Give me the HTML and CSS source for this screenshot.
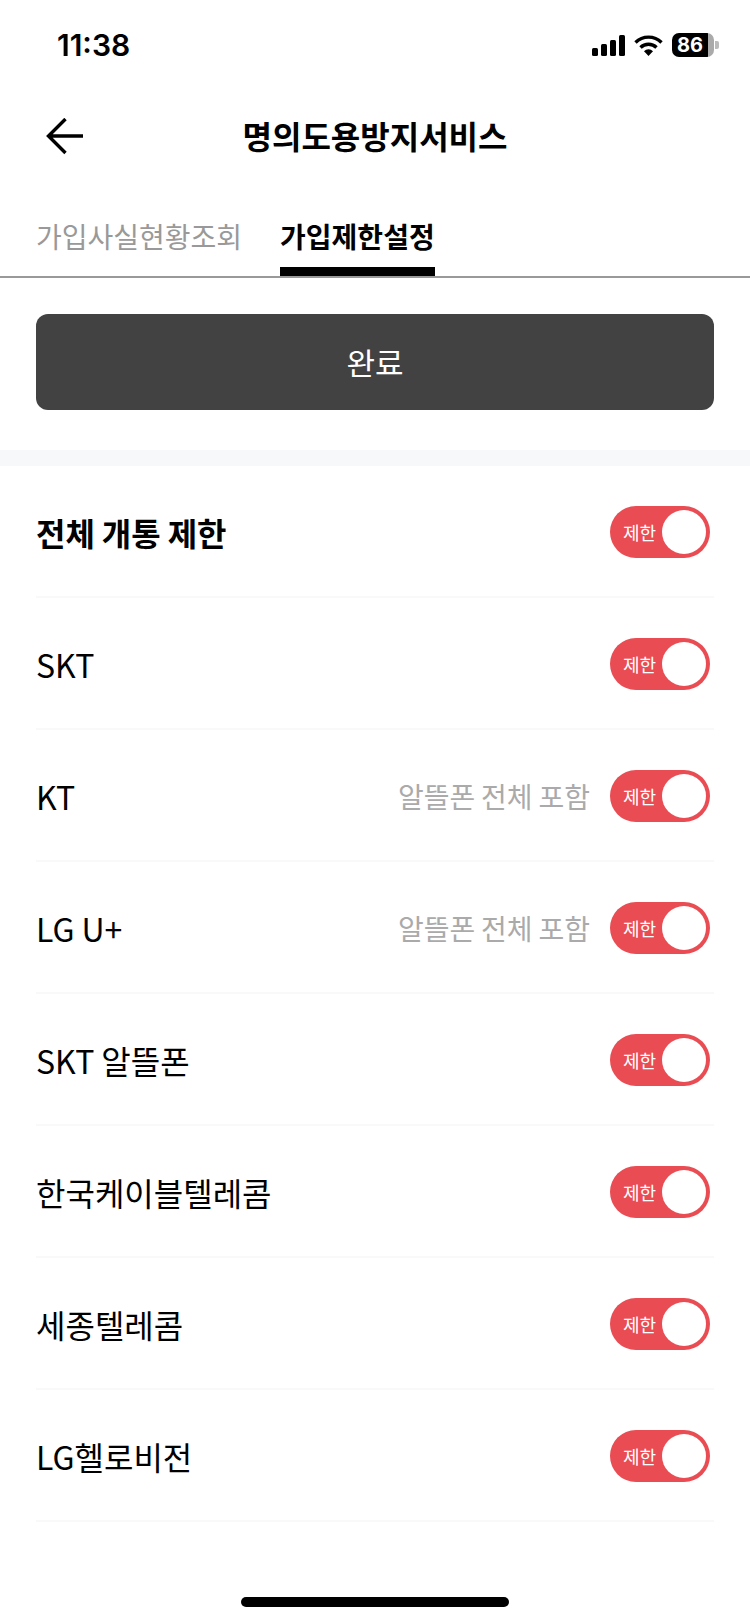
FILE: index.html
```html
<!DOCTYPE html>
<html lang="ko">
<head>
    <meta charset="UTF-8">
    <meta name="viewport" content="width=device-width, initial-scale=1.0">
    <title>명의도용방지서비스</title>
    <link rel="stylesheet" href="styles.css">
</head>
<body>
    <div class="status-bar">
        <span class="time">11:38</span>
        <div class="status-icons">
            <svg width="33" height="21" viewBox="0 0 33 21"><rect x="0" y="13" width="6" height="8" rx="1.5"/><rect x="9" y="9" width="6" height="12" rx="1.5"/><rect x="18" y="5" width="6" height="16" rx="1.5"/><rect x="27" y="0" width="6" height="21" rx="1.5"/></svg>
            <svg width="29" height="21" viewBox="0 0 29 21"><path d="M1.500 7.500a18.500 18.500 0 0 1 26 0" fill="none" stroke="#000" stroke-width="3.400"/><path d="M6.500 12.500a11.500 11.500 0 0 1 16 0" fill="none" stroke="#000" stroke-width="3.400"/><path d="M14.500 21l-4.500-4.800a6.400 6.400 0 0 1 9 0z"/></svg>
            <div class="battery"><div class="battery-body"><span class="battery-num">86</span></div><div class="battery-cap"></div></div>
        </div>
    </div>
    <header class="nav">
        <svg class="back" width="38" height="38" viewBox="0 0 38 38"><path d="M37 18H3M19.500 1L2.500 18L19.500 35" fill="none" stroke="#000" stroke-width="3.400"/></svg>
        <h1>명의도용방지서비스</h1>
    </header>
    <div class="tabs">
        <a class="tab">가입사실현황조회</a>
        <a class="tab active">가입제한설정</a>
    </div>
    <div class="action">
        <button type="button">완료</button>
    </div>
    <div class="band"></div>
    <ul class="list">
        <li class="row title"><span class="name">전체 개통 제한</span><div class="toggle"><span>제한</span><i></i></div></li>
        <li class="row"><span class="name">SKT</span><div class="toggle"><span>제한</span><i></i></div></li>
        <li class="row"><span class="name">KT</span><span class="note">알뜰폰 전체 포함</span><div class="toggle"><span>제한</span><i></i></div></li>
        <li class="row"><span class="name">LG U+</span><span class="note">알뜰폰 전체 포함</span><div class="toggle"><span>제한</span><i></i></div></li>
        <li class="row"><span class="name">SKT 알뜰폰</span><div class="toggle"><span>제한</span><i></i></div></li>
        <li class="row"><span class="name">한국케이블텔레콤</span><div class="toggle"><span>제한</span><i></i></div></li>
        <li class="row"><span class="name">세종텔레콤</span><div class="toggle"><span>제한</span><i></i></div></li>
        <li class="row"><span class="name">LG헬로비전</span><div class="toggle"><span>제한</span><i></i></div></li>
    </ul>
    <div class="home-bar"></div>
</body>
</html>
```

FILE: styles.css
```css
* {
    box-sizing: border-box;
}
html, body {
    margin: 0;
    padding: 0;
}
body {
    width: 750px;
    height: 1624px;
    overflow: hidden;
    position: relative;
    background: #fff;
    color: #000;
    font-family: "Noto Sans CJK KR", "Noto Sans", sans-serif;
}
.status-bar {
    height: 90px;
    padding: 24px 31px 0 57px;
    display: flex;
    justify-content: space-between;
    align-items: flex-start;
}
.time {
    font-family: Inter, sans-serif;
    font-size: 30px;
    font-weight: 600;
    line-height: 42px;
}
.status-icons {
    display: flex;
    align-items: center;
    gap: 9px;
    padding-top: 9px;
}
.battery {
    display: flex;
    align-items: center;
    gap: 1px;
}
.battery-body {
    width: 42px;
    height: 24px;
    border-radius: 7px;
    background: linear-gradient(to right, #000 36px, #aaa 36px);
    overflow: hidden;
}
.battery-num {
    display: block;
    width: 36px;
    text-align: center;
    color: #fff;
    font-family: Inter, sans-serif;
    font-size: 20px;
    font-weight: 700;
    line-height: 24px;
}
.battery-cap {
    width: 4px;
    height: 8px;
    background: #bbb;
    border-radius: 0 2px 2px 0;
}
.nav {
    height: 96px;
    padding-bottom: 6px;
    position: relative;
    display: flex;
    justify-content: center;
    align-items: center;
}
.nav h1 {
    margin: 0;
    font-size: 32px;
    font-weight: 700;
}
.back {
    position: absolute;
    left: 46px;
    top: 28px;
}
.tabs {
    height: 92px;
    padding: 0 36px;
    display: flex;
    gap: 38px;
    border-bottom: 2px solid #999;
}
.tab {
    height: 90px;
    padding-top: 29px;
    font-size: 28px;
    line-height: 42px;
    color: #999;
}
.tab.active {
    color: #000;
    font-weight: 700;
    border-bottom: 9px solid #000;
}
.action {
    padding: 36px 36px 40px;
}
.action button {
    display: block;
    width: 100%;
    height: 96px;
    padding-bottom: 2px;
    border: none;
    border-radius: 12px;
    background: #424242;
    color: #fff;
    font-family: inherit;
    font-size: 31px;
}
.band {
    height: 16px;
    background: #f7f8fa;
}
.list {
    margin: 0;
    padding: 0;
    list-style: none;
}
.row {
    height: 132px;
    margin: 0 36px;
    padding: 2px 4px 0 0;
    display: flex;
    align-items: center;
    border-bottom: 2px solid #f9f9f9;
    font-size: 32px;
    word-spacing: -2px;
}
.row.title .name {
    font-weight: 700;
}
.name {
    flex: 1;
}
.note {
    margin-right: 20px;
    color: #aaa;
    font-size: 28px;
}
.toggle {
    width: 100px;
    height: 52px;
    padding: 0 4px 0 13px;
    border-radius: 26px;
    background: #e94c52;
    display: flex;
    align-items: center;
    justify-content: space-between;
    color: #fff;
    font-size: 18px;
}
.toggle i {
    width: 44px;
    height: 44px;
    border-radius: 50%;
    background: #fff;
}
.home-bar {
    position: absolute;
    left: 241px;
    bottom: 17px;
    width: 268px;
    height: 10px;
    border-radius: 5px;
    background: #000;
}
```
